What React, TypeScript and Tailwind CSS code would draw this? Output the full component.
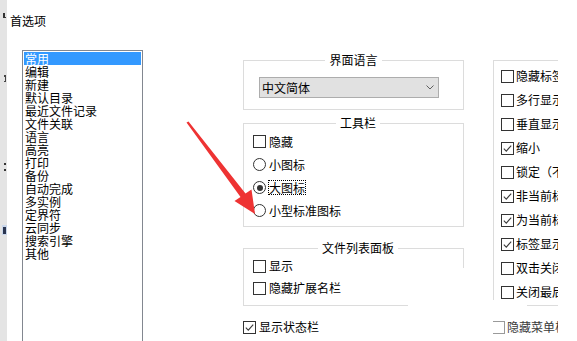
import React from "react";

function Check({ checked, faded }: { checked?: boolean; faded?: boolean }) {
  return (
    <span
      className={
        faded
          ? "inline-flex h-[13px] w-[13px] shrink-0 items-center justify-center border border-[#9a9a9a] bg-white"
          : "inline-flex h-[13px] w-[13px] shrink-0 items-center justify-center border border-[#333333] bg-white"
      }
    >
      {checked && (
        <svg width="11" height="11" viewBox="0 0 11 11" className="block">
          <path d="M1.8 5.6 L4.3 8.1 L9.2 2.6" fill="none" stroke="#3a3a3a" strokeWidth="1.1" />
        </svg>
      )}
    </span>
  );
}

function Radio({ checked }: { checked?: boolean }) {
  return (
    <span className="inline-flex h-[13px] w-[13px] shrink-0 items-center justify-center rounded-full border border-[#333333] bg-white">
      {checked && <span className="h-[6px] w-[6px] rounded-full bg-[#333333]" />}
    </span>
  );
}

const listItems = [
  "常用",
  "编辑",
  "新建",
  "默认目录",
  "最近文件记录",
  "文件关联",
  "语言",
  "高亮",
  "打印",
  "备份",
  "自动完成",
  "多实例",
  "定界符",
  "云同步",
  "搜索引擎",
  "其他",
];

const rightItems: { t: string; c: boolean }[] = [
  { t: "隐藏标签栏", c: false },
  { t: "多行显示标签", c: false },
  { t: "垂直显示标签", c: false },
  { t: "缩小", c: true },
  { t: "锁定（不允许关闭）", c: false },
  { t: "非当前标签", c: true },
  { t: "为当前标签", c: true },
  { t: "标签显示", c: true },
  { t: "双击关闭标签", c: false },
  { t: "关闭最后一个", c: false },
];

export default function App() {
  return (
    <div className="relative flex h-[341px] w-[577px] overflow-hidden bg-white font-['Noto_Sans_CJK_SC',sans-serif] text-[12px] text-black">
      {/* window edge behind */}
      <div className="relative h-full w-[7px] shrink-0 bg-[#e4e4e4]">
        <span className="absolute left-[3px] top-[13px] h-[5px] w-[2px] bg-[#333]" />
        <span className="absolute left-[3px] top-[17px] h-[1px] w-[3px] bg-[#333]" />
        <span className="absolute left-[4px] top-[75px] h-[2px] w-[2px] bg-[#444]" />
        <span className="absolute left-[5px] top-[77px] h-[4px] w-[1px] bg-[#444]" />
        <span className="absolute left-[4px] top-[81px] h-[1px] w-[2px] bg-[#444]" />
        <span className="absolute left-[4px] top-[163px] h-[2px] w-[2px] bg-[#333]" />
        <span className="absolute left-[4px] top-[169px] h-[2px] w-[2px] bg-[#333]" />
        <span className="absolute left-[2px] top-[225px] h-[10px] w-[5px] bg-[#c9d6ea]" />
        <span className="absolute left-[3px] top-[227px] h-[7px] w-[3px] bg-[#2a3550]" />
      </div>

      <div className="flex flex-col">
        <div className="ml-[3px] mt-[13px] h-[16px] leading-[16px]">首选项</div>

        <div className="mt-[21px] flex items-start">
          {/* category list */}
          <div className="ml-[15px] h-[300px] w-[121px] shrink-0 border border-[#828790] bg-white p-px">
            {listItems.map((t, i) => (
              <div
                key={t}
                className={
                  i === 0
                    ? "h-[13px] whitespace-nowrap bg-[#3399ff] pl-px leading-[13px] text-white"
                    : "h-[13px] whitespace-nowrap pl-px leading-[13px]"
                }
              >
                {t}
              </div>
            ))}
          </div>

          {/* middle column */}
          <div className="ml-[100px] flex w-[221px] shrink-0 flex-col">
            <fieldset className="mt-[3px] border border-[#dcdcdc] pb-[11px]">
              <legend className="mx-auto px-[4px] leading-[14px]">界面语言</legend>
              <div className="ml-[15px] mt-[10px] flex h-[21px] w-[180px] items-center justify-between border border-[#adadad] bg-[#e1e1e1] pl-[2px] pr-[4px]">
                <span className="leading-[14px]">中文简体</span>
                <svg width="8" height="5" viewBox="0 0 8 5" className="block">
                  <path d="M0.5 0.5 L4 4 L7.5 0.5" fill="none" stroke="#606060" strokeWidth="1" />
                </svg>
              </div>
            </fieldset>

            <fieldset className="mt-[6px] border border-[#dcdcdc] pb-[4px] pl-[9px]">
              <legend className="mx-auto px-[4px] leading-[14px]">工具栏</legend>
              <div className="flex h-[23px] items-center gap-[3px]">
                <Check />
                <span>隐藏</span>
              </div>
              <div className="flex h-[23px] items-center gap-[3px]">
                <Radio />
                <span>小图标</span>
              </div>
              <div className="flex h-[23px] items-center gap-[2px]">
                <Radio checked />
                <span className="border border-dotted border-black leading-[13px]">大图标</span>
              </div>
              <div className="flex h-[23px] items-center gap-[3px]">
                <Radio />
                <span>小型标准图标</span>
              </div>
            </fieldset>

            <fieldset className="mt-[14px] border border-[#dcdcdc] pb-[6px] pl-[9px]">
              <legend className="mx-auto px-[4px] leading-[14px]">文件列表面板</legend>
              <div className="flex h-[22px] items-center gap-[3px]">
                <Check />
                <span>显示</span>
              </div>
              <div className="flex h-[22px] items-center gap-[3px]">
                <Check />
                <span>隐藏扩展名栏</span>
              </div>
            </fieldset>

            <div className="mt-[11px] flex h-[20px] items-center gap-[3px]">
              <Check checked />
              <span>显示状态栏</span>
            </div>
          </div>

          {/* right column (clipped) */}
          <div className="ml-[29px] flex w-[65px] shrink-0 flex-col overflow-hidden">
            <div className="mt-[10px] w-[120px] border border-[#dcdcdc] pb-px pl-[7px] pt-[3px]">
              {rightItems.map((r) => (
                <div key={r.t} className="flex h-[24px] items-center gap-[2px] whitespace-nowrap">
                  <Check checked={r.c} />
                  <span>{r.t}</span>
                </div>
              ))}
            </div>
            <div className="-ml-px mt-[11px] flex h-[20px] items-center gap-[2px] whitespace-nowrap text-[#3a3a3a]">
              <Check faded />
              <span>隐藏菜单栏</span>
            </div>
          </div>
        </div>
      </div>

      {/* pasted-over white patches */}
      <div className="pointer-events-none absolute left-[408px] top-[268px] h-[42px] w-[84px] bg-white" />
      <div className="pointer-events-none absolute left-[464px] top-[300px] h-[10px] w-[63px] bg-white" />

      {/* red annotation arrow */}
      <svg
        className="pointer-events-none absolute left-0 top-0"
        width="577"
        height="341"
        viewBox="0 0 577 341"
      >
        <polygon
          points="186.5,122.5 188.5,121.5 245.5,193.5 251.5,189.5 255,214 234.5,201 240.5,197"
          fill="#ee3333"
        />
      </svg>
    </div>
  );
}
